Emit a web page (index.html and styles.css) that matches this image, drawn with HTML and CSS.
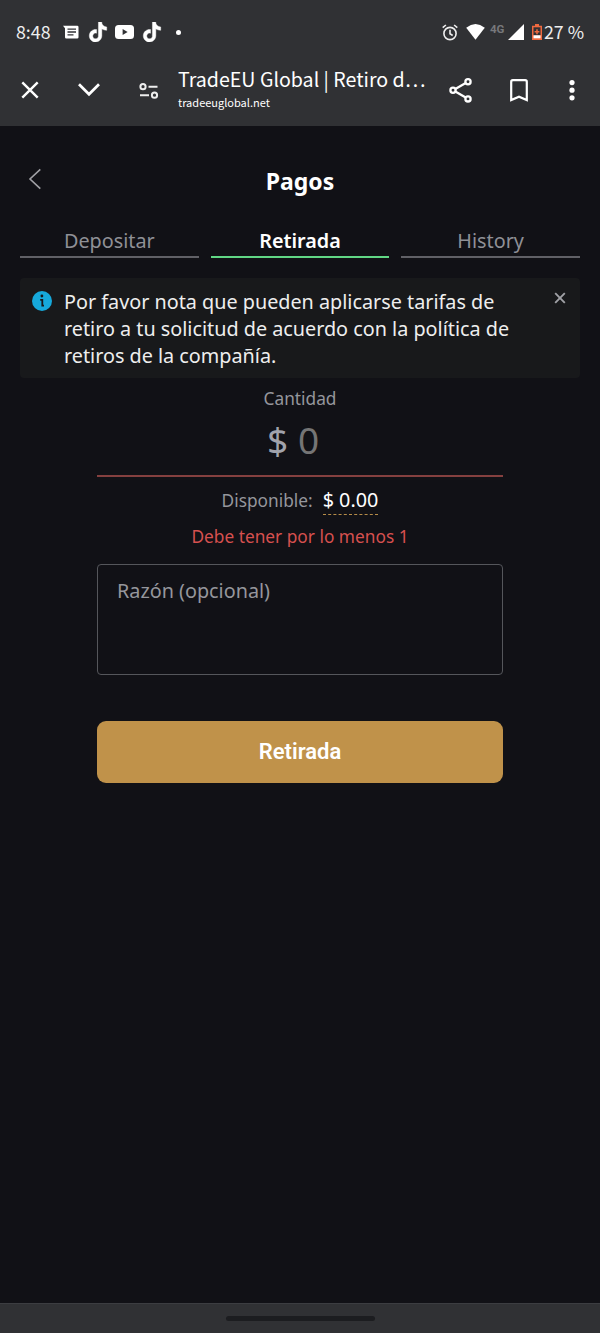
FILE: index.html
```html
<!DOCTYPE html>
<html lang="es">
<head>
<meta charset="utf-8">
<title>TradeEU Global | Retiro de fondos</title>
<link rel="stylesheet" href="styles.css">
</head>
<body>
<div class="screen">
  <header class="chrome">
    <div class="status">
      <span class="clock">8:48</span>
      <svg class="i-msg" width="16" height="14" viewBox="0 0 16 14"><path fill="#fff" fill-rule="evenodd" d="M0 .7h14.2q1.3 0 1.3 1.3v10.2q0 1.3-1.3 1.3H3.300q-1.300 0-1.300-1.300V3.300zM4.500 3.400v1.400h8.500V3.400zM4.500 6.300v1.400h8.500V6.300zM4.500 9.200v1.400h6V9.200z"/></svg>
      <svg class="i-tik" width="20" height="20" viewBox="0 0 24 24"><path id="tik" fill="#fff" stroke="#fff" stroke-width=".5" d="M12.525.02c1.31-.02 2.61-.01 3.91-.02.08 1.53.63 3.09 1.75 4.17 1.12 1.11 2.7 1.62 4.24 1.79v4.03c-1.44-.05-2.89-.35-4.2-.97-.57-.26-1.1-.59-1.62-.93-.01 2.92.01 5.84-.02 8.75-.08 1.4-.54 2.79-1.35 3.94-1.31 1.92-3.58 3.17-5.91 3.21-1.43.08-2.86-.31-4.08-1.03-2.02-1.19-3.44-3.37-3.65-5.71-.02-.5-.03-1-.01-1.49.18-1.9 1.12-3.72 2.58-4.96 1.66-1.44 3.98-2.13 6.15-1.72.02 1.48-.04 2.96-.04 4.44-.99-.32-2.15-.23-3.02.37-.63.41-1.11 1.04-1.36 1.75-.21.51-.15 1.07-.14 1.61.24 1.64 1.82 3.02 3.5 2.87 1.12-.01 2.19-.66 2.77-1.61.19-.33.4-.67.41-1.06.1-1.79.06-3.57.07-5.36.01-4.03-.01-8.05.02-12.07z"/></svg>
      <svg class="i-yt" width="19" height="14" viewBox="0 0 19 14"><rect width="19" height="14" rx="3.500" fill="#fff"/><path d="M7.600 4.100v5.800l5-2.900z" fill="#303134"/></svg>
      <svg class="i-tik2" width="20" height="20" viewBox="0 0 24 24"><use href="#tik"/></svg>
      <span class="dot"></span>
      <svg class="i-alarm" width="16" height="17" viewBox="0 0 16 17"><g fill="none" stroke="#eee" stroke-width="1.600"><circle cx="8" cy="9.500" r="6.100"/><path d="M8 5.800v4l2.700 1.700M.7 3.700l3.200-2.700M15.300 3.700 12.100 1"/></g></svg>
      <svg class="i-wifi" width="19" height="16" viewBox="0 0 19 16"><path fill="#fff" d="M.2 3.700Q9.500-3.500 18.800 3.700L9.500 15.800z"/></svg>
      <span class="net">4G</span>
      <svg class="i-sig" width="16" height="16" viewBox="0 0 16 16"><path fill="#fff" d="M16 0v16H0z"/></svg>
      <svg class="i-bat" width="10" height="16" viewBox="0 0 10 16"><path fill="#f0693f" d="M3 0h4v1.700h3V16H0V1.700h3z"/><path fill="#303134" d="M1.500 3.300h7v8h-7z"/><path fill="#fff" d="M1.500 11.300h7v3h-7z"/><path d="M5 5.200v5M2.600 7.700h4.800" stroke="#f0693f" stroke-width="1.500"/></svg>
      <span class="pct">27 %</span>
    </div>
    <div class="toolbar">
      <svg class="i-x" width="18" height="18" viewBox="0 0 18 18"><path d="M1.300 1.300l15.400 15.400M16.700 1.300 1.300 16.700" stroke="#fff" stroke-width="2.400"/></svg>
      <svg class="i-down" width="22" height="14" viewBox="0 0 22 14"><path d="M1 1.300l10 10 10-10" fill="none" stroke="#fff" stroke-width="2.700"/></svg>
      <svg class="i-tune" width="20" height="16" viewBox="0 0 20 16"><g fill="none" stroke="#eee" stroke-width="2"><circle cx="4" cy="3.700" r="2.600"/><path d="M9.500 3.700h9M1 12.200h9"/><circle cx="15.500" cy="12.200" r="2.600"/></g></svg>
      <div class="page-id">
        <div class="page-title">TradeEU Global | Retiro d…</div>
        <div class="page-host">tradeeuglobal.net</div>
      </div>
      <svg class="i-share" width="24" height="26" viewBox="0 0 24 26"><g fill="none" stroke="#fff" stroke-width="2.300"><circle cx="4" cy="13.300" r="2.600"/><circle cx="19" cy="4.700" r="2.600"/><circle cx="19" cy="21.900" r="2.600"/><path d="M6.300 12 16.700 6M6.300 14.600l10.400 6"/></g></svg>
      <svg class="i-mark" width="18" height="23" viewBox="0 0 18 23"><path d="M1.200 21.100V2.800q0-1.600 1.600-1.600h12.400q1.600 0 1.600 1.600v18.300L9 17.700z" fill="none" stroke="#fff" stroke-width="2.200"/></svg>
      <svg class="i-more" width="6" height="22" viewBox="0 0 6 22"><g fill="#fff"><circle cx="3" cy="3.600" r="2.600"/><circle cx="3" cy="11.200" r="2.600"/><circle cx="3" cy="18.800" r="2.600"/></g></svg>
    </div>
  </header>

  <main class="content">
    <div class="heading">
      <svg class="back" width="14" height="22" viewBox="0 0 14 22"><path d="M12.300 1.300 2 11l10.300 9.700" fill="none" stroke="#a0a0a5" stroke-width="1.600"/></svg>
      <h1>Pagos</h1>
    </div>
    <nav class="tabs">
      <a class="tab">Depositar</a>
      <a class="tab active">Retirada</a>
      <a class="tab">History</a>
    </nav>
    <section class="notice">
      <svg class="info" width="20" height="20" viewBox="0 0 20 20"><circle cx="10" cy="10" r="10" fill="#16a9db"/><circle cx="9.900" cy="5" r="1.400" fill="#18191b"/><path d="M8.200 8.900h2.100v5.700h1.700" fill="none" stroke="#18191b" stroke-width="1.800"/></svg>
      <p>Por favor nota que pueden aplicarse tarifas de<br>retiro a tu solicitud de acuerdo con la política de<br>retiros de la compañía.</p>
      <svg class="dismiss" width="12" height="12" viewBox="0 0 12 12"><path d="M1.200 1.200l9.600 9.600M10.800 1.200l-9.600 9.600" stroke="#a0a1a6" stroke-width="1.900"/></svg>
    </section>
    <form class="form">
      <div class="label">Cantidad</div>
      <div class="amount"><span class="cur">$</span><span class="zero">0</span></div>
      <div class="available"><span class="avail-label">Disponible:</span><span class="avail-sum">$ 0.00</span></div>
      <div class="error">Debe tener por lo menos 1</div>
      <div class="reason">Razón (opcional)</div>
      <button class="submit" type="button">Retirada</button>
    </form>
  </main>
  <footer class="navbar"><span class="handle"></span></footer>
</div>
</body>
</html>
```
FILE: styles.css
```css
* { box-sizing: border-box; }
body { margin: 0; background: #111116; font-family: "Noto Sans", sans-serif; color: #fff; }
svg { display: block; flex: none; }
.screen { width: 600px; height: 1333px; display: flex; flex-direction: column; overflow: hidden; }

.chrome { height: 126px; background: #303134; font-family: "Noto Sans CJK SC", sans-serif; flex: none; }
.status { height: 64px; display: flex; align-items: center; white-space: nowrap; }
.clock { width: 47px; margin: -2px 0 0 16px; font-size: 17.800px; line-height: 24px; color: #eee; }
.i-tik { margin-left: 9px; }
.i-yt { margin-left: 7px; }
.i-tik2 { margin-left: 8px; }
.dot { width: 5px; height: 5px; border-radius: 50%; background: #fff; margin-left: 14px; }
.i-alarm { margin-left: 261px; }
.i-wifi { margin-left: 8px; }
.net { width: 18px; margin: -6px 0 0 5px; font: 700 11.500px/14px Roboto, sans-serif; color: #77787b; }
.i-bat { margin-left: 8px; }
.pct { margin: -2px 0 0 2px; font-size: 17.800px; line-height: 24px; color: #eee; }

.toolbar { height: 62px; display: flex; align-items: center; padding-bottom: 10px; }
.i-x { margin-left: 21px; }
.i-down { margin-left: 39px; }
.i-tune { margin: 1px 0 0 39px; }
.page-id { width: 271px; margin: 0 0 0 19px; white-space: nowrap; }
.page-title { font-size: 19.600px; line-height: 25px; }
.page-host { font-size: 11px; line-height: 23px; }
.i-mark { margin-left: 37px; }
.i-more { margin-left: 41px; }

.content { flex: 1; padding: 0 20px; }
.heading { height: 93px; padding-top: 41px; display: flex; align-items: flex-start; }
.back { margin: 1px 0 0 8px; }
.heading h1 { flex: 1; margin: 0 22px 0 0; text-align: center; font-size: 23px; line-height: 28px; font-weight: 700; }
.tabs { display: grid; grid-template-columns: repeat(3, 1fr); gap: 12px; }
.tab { height: 39px; border-bottom: 2px solid #606066; text-align: center; font-size: 19.800px; line-height: 44px; color: #8f9096; }
.tab.active { border-color: #61d785; color: #fff; font-weight: 600; }

.notice { display: flex; margin-top: 20px; height: 100px; padding: 10px 14px 0 12px; background: #18191b; border-radius: 4px; }
.info { margin-top: 3px; }
.notice p { flex: 1; margin: 0 0 0 12px; font-size: 19.800px; line-height: 27px; color: #eee; white-space: nowrap; }
.dismiss { margin-top: 4px; }

.form { width: 406px; margin: 0 auto; text-align: center; }
.label { padding-top: 8px; font-size: 17.300px; line-height: 26px; color: #95969c; }
.amount { display: flex; height: 65px; padding: 0 0 0 170px; border-bottom: 2px solid #85403f; font-size: 37px; line-height: 56px; }
.cur { width: 31px; text-align: left; color: #a1a3ac; }
.zero { color: #757575; }
.available { display: flex; justify-content: center; height: 44px; padding-top: 10px; }
.avail-label { margin-right: 10px; font-size: 17.300px; line-height: 28px; color: #95969c; }
.avail-sum { height: 28px; border-bottom: 1px dashed #b68c48; font-size: 19.800px; line-height: 26px; }
.error { height: 30px; font-size: 17.300px; line-height: 32px; color: #d6504f; }
.reason { height: 111px; margin-top: 13px; padding: 12px 19px; border: 1px solid #55565b; border-radius: 4px; text-align: left; font-size: 19.800px; line-height: 28px; color: #95969c; }
.submit { display: block; width: 406px; height: 62px; margin-top: 46px; padding: 0; border: 0; border-radius: 9px; background: #c0924a; color: #fff; font: 600 22px/62px Roboto, sans-serif; }

.navbar { height: 30px; background: #303134; border-top: 1px solid #3c3d41; display: flex; align-items: center; justify-content: center; flex: none; }
.handle { width: 149px; height: 5px; border-radius: 3px; background: #1c1d20; }
```
